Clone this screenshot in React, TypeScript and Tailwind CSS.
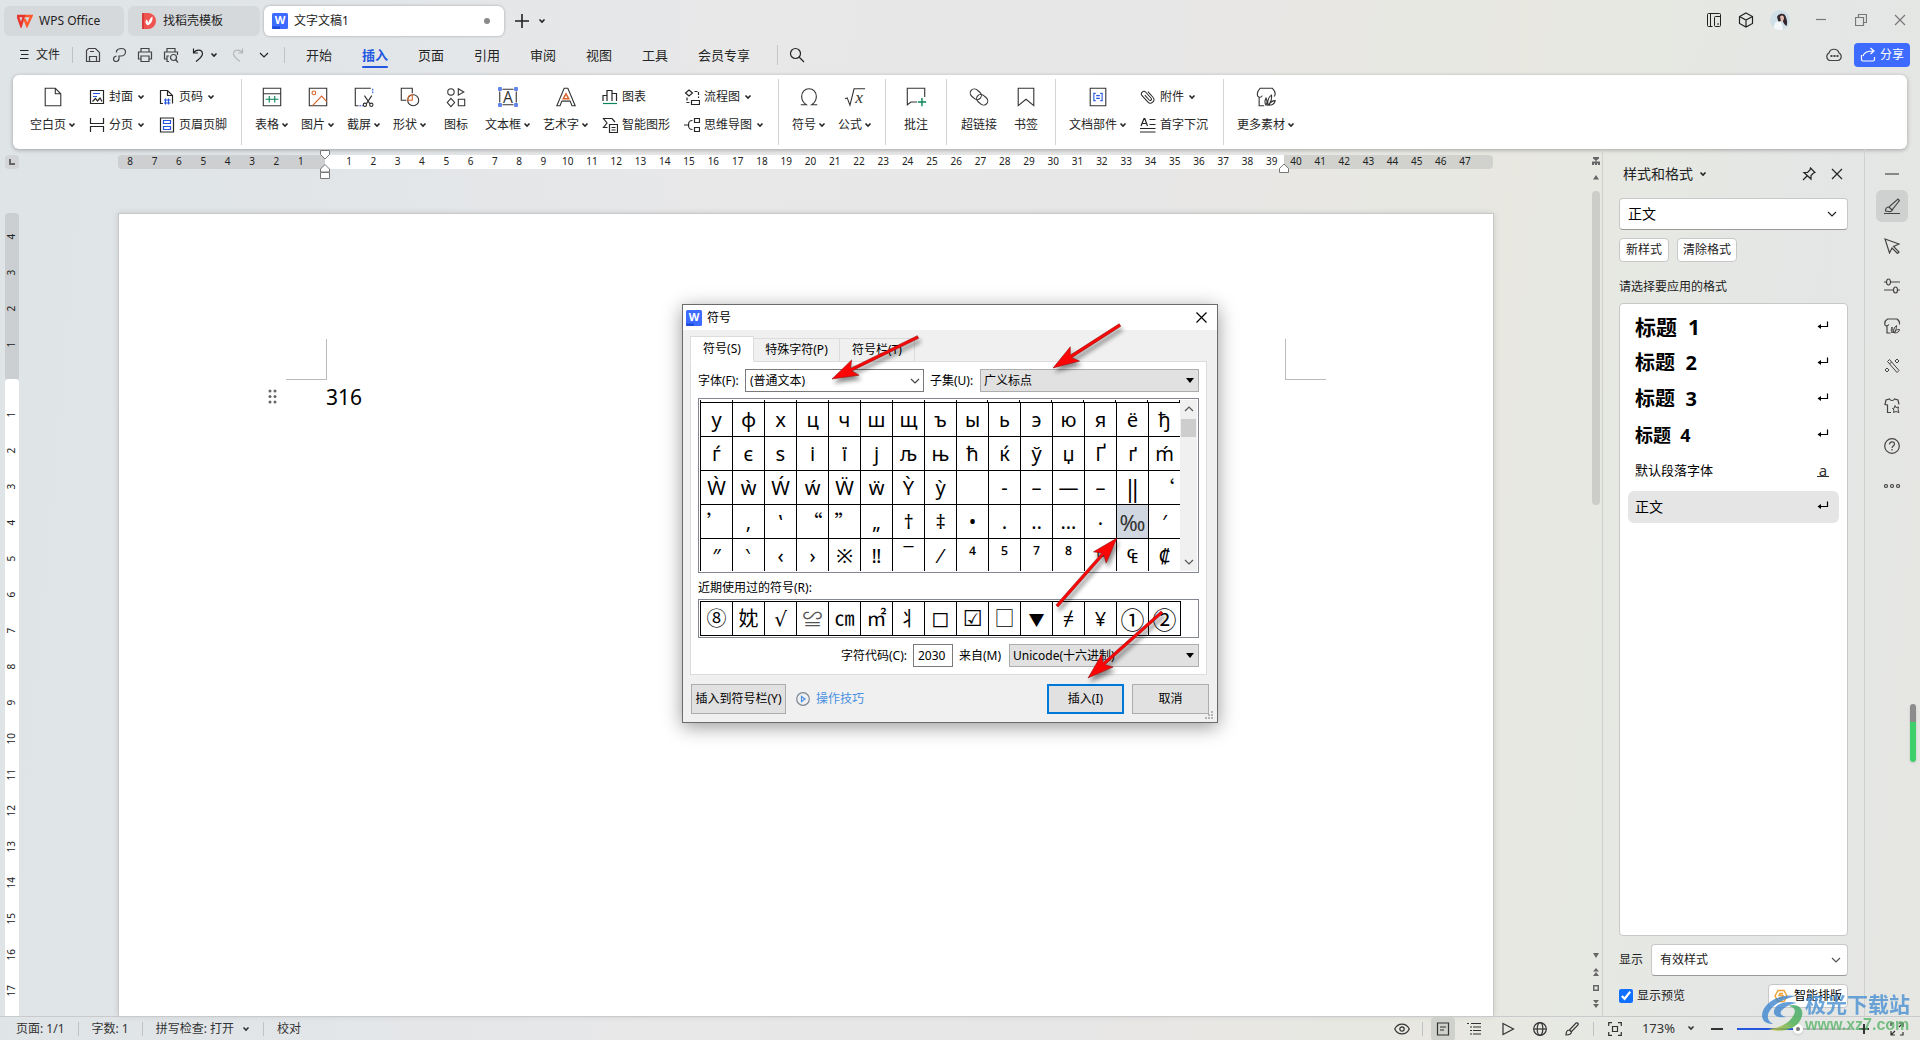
import { useState, type ReactNode } from "react";

type IconProps = { children: ReactNode; size?: number; className?: string };

// Line icons, one unit per pixel
function Icon({ children, size = 24, className = "" }: IconProps) {
  return (
    <svg
      width={size}
      height={size}
      viewBox={`0 0 ${size} ${size}`}
      fill="none"
      stroke="currentColor"
      strokeWidth="1.2"
      className={`shrink-0 ${className}`}
      aria-hidden="true"
    >
      {children}
    </svg>
  );
}

function Caret({ className = "" }: { className?: string }) {
  return (
    <svg width="8" height="8" viewBox="0 0 8 8" fill="none" stroke="currentColor" strokeWidth="1.6" className={`shrink-0 ${className}`} aria-hidden="true">
      <path d="M1.5 2.5 4 5l2.500-2.500" />
    </svg>
  );
}

function WideCaret({ className = "" }: { className?: string }) {
  return (
    <svg width="12" height="8" viewBox="0 0 12 8" fill="none" stroke="currentColor" strokeWidth="1.2" className={`shrink-0 ${className}`} aria-hidden="true">
      <path d="M2 2l4 4 4-4" />
    </svg>
  );
}

function DocLogo() {
  return (
    <svg width="16" height="16" viewBox="0 0 16 16" aria-hidden="true" className="shrink-0">
      <rect width="16" height="16" rx="1.500" fill="#3d6bff" />
      <path d="M0 13.500h8V16H1.500A1.500 1.500 0 0 1 0 14.500z" fill="#1d49dc" />
      <text x="8" y="11" textAnchor="middle" fontSize="11" fontWeight="700" fill="#fff" fontFamily="Noto Sans, sans-serif">
        W
      </text>
    </svg>
  );
}

const BLUE = "#2456e0";
const GREEN = "#0b8457";
const ORANGE = "#d8632b";

const icons: Record<string, ReactNode> = {
  blank: <path d="M3.500 2.500h11l6 6v13h-17zM14.500 2.500v6h6" />,
  table: (
    <>
      <path d="M2.500 2.500h19v19h-19zM2.500 8.500h19" />
      <path d="M5 14.500h14M9 11v7M15 11v7" stroke={GREEN} />
    </>
  ),
  picture: (
    <>
      <path d="M2.500 2.500h19v19h-19z" />
      <circle cx="7.500" cy="7.500" r="2" stroke={ORANGE} />
      <path d="M6 21.500 16 11l5.500 6" stroke={ORANGE} />
    </>
  ),
  screenshot: (
    <>
      <path d="M6 21.500H2.500v-19h17" />
      <path d="M21.500 3v6M7 21.500h4" stroke={BLUE} strokeDasharray="2 1" />
      <path d="M12.500 10.500l6 9M20.500 10.500l-6 9" />
      <circle cx="13" cy="20.500" r="1.800" />
      <circle cx="20" cy="20.500" r="1.800" />
    </>
  ),
  shapes: (
    <>
      <path d="M8 15.500H2.500v-13h12V8" />
      <circle cx="15.500" cy="15.500" r="6" />
      <path d="M9.500 15.500c0-3.500 2-6 5-6v6z" stroke={ORANGE} />
    </>
  ),
  iconset: (
    <>
      <circle cx="6.500" cy="6.500" r="3.500" />
      <path d="M14.500 3v7l6-3.500zM6.500 13.500l4 4.500-4 4.500-4-4.500zM14.500 14.500h7v7h-7z" />
    </>
  ),
  textbox: (
    <>
      <path d="M3 6v12M21 6v12M6 3.500h12M6 20.500h12" />
      <g stroke={BLUE}>
        <path d="M2 2h2.500v2.500H2zM19.500 2H22v2.500h-2.500zM2 19.500h2.500V22H2zM19.500 19.500H22V22h-2.500z" />
      </g>
      <text x="12" y="18" textAnchor="middle" fontSize="17" fill="#333" stroke="none" fontFamily="Open Sans, sans-serif">
        A
      </text>
    </>
  ),
  wordart: (
    <>
      <path d="M10 2.500h4l8 19h-3.500l-2-5h-9l-2 5H2z" />
      <path d="M12 8.500l3 5.500H9z" stroke={ORANGE} strokeWidth="1.600" />
    </>
  ),
  omega: <path d="M3 20.500h6c-3-2-5-5-5-9 0-5 3.500-8.500 8-8.500s8 3.500 8 8.500c0 4-2 7-5 9h6" />,
  formula: (
    <>
      <path d="M1 14l2.500-1 3 8L11 3h12" />
      <text x="16.500" y="19" textAnchor="middle" fontSize="19" fontStyle="italic" fill="#333" stroke="none" fontFamily="Liberation Serif, serif">
        x
      </text>
    </>
  ),
  comment: (
    <>
      <path d="M21.500 12V2.500h-19v18l4-3H13" />
      <path d="M18.500 13v9M14 17.500h9" stroke={GREEN} strokeWidth="1.500" />
    </>
  ),
  link: (
    <>
      <rect x="2" y="4.500" width="13" height="9" rx="4.500" transform="rotate(40 8.500 9)" />
      <rect x="9" y="10.500" width="13" height="9" rx="4.500" transform="rotate(40 15.500 15)" />
    </>
  ),
  bookmark: <path d="M3.500 2.500h17v19L12 14.500l-8.500 7z" />,
  docparts: (
    <>
      <path d="M3.500 2.500h17v19h-17z" />
      <path d="M9.500 8h-2v8h2M14.500 8h2v8h-2M10 10.500h4M10 13.500h4" stroke={BLUE} />
    </>
  ),
  material: (
    <>
      <path d="M10 21.500H4.500V12M21 11.500c2-3 1-6-2-9H5.500c-3 3-3.500 6-2.500 8.500 1.500 2 4 1.500 5-.500" />
      <path d="M12 21c-2-3-1.500-5 0-8 1.500 3 2 5 0 8zM14 21c-.500-5 1-9 4-11 .500 4-.500 8-4 11zM15 21c1.500-4 4-5 7-5-.500 3-3 5-7 5z" />
    </>
  ),
};

const smallIcons: Record<string, ReactNode> = {
  cover: (
    <>
      <path d="M1.500 1.500h13v13h-13z" />
      <path d="M4 4.500h7M4 7.500h4" stroke={BLUE} />
      <path d="M3.500 12.500l3-3 2 2.500 2.500-3 2 3.500" />
    </>
  ),
  pagebreak: <path d="M1.500 1v5.500h13V1M1.500 15V9.500h13V15" />,
  pageno: (
    <>
      <path d="M4 14.500H1.500v-13h7l5 5v8M8.500 1.500v5h5" />
      <path d="M6.500 9.500v6M9.500 9.500v6M5 11h6.500M5 14h6.500" stroke={BLUE} />
    </>
  ),
  headfoot: (
    <>
      <path d="M1.500 1h13v14h-13z" />
      <path d="M4.500 3.500h7v3h-7zM4.500 9.500h7v3h-7z" stroke={BLUE} />
    </>
  ),
  chart: (
    <>
      <path d="M1 12V6.500h4V12M5 8V1.500h5V12M10 4.500h4.500V12" />
      <path d="M1 14.500h14" stroke={GREEN} />
    </>
  ),
  smartart: <path d="M5.500 10.500h-4L5 6 1.500 1.500H10L13 5M7.500 7.500h8v8h-8zM9.500 10.500h4M9.500 13h4" />,
  flow: (
    <>
      <path d="M5 1l3.500 3L5 7 1.500 4zM7.500 11.500h8v4h-8z" />
      <path d="M3 8.500v5h3.500M10.500 2.500h4V9" strokeDasharray="3 1.500" />
    </>
  ),
  mind: (
    <>
      <path d="M10.500 1.500h5v4h-5zM10.500 10.500h5v4h-5zM0 8h4.500" />
      <path d="M8.500 3.500c-3 0-4 1-4 4.500s1 4.500 4 4.500" />
    </>
  ),
  clip: (
    <g transform="rotate(-42 8 8)" strokeWidth="1">
      <path d="M11.500 4v7.500a3.500 3.500 0 0 1-7 0V3a2.500 2.500 0 0 1 5 0v8a1.300 1.300 0 0 1-2.600 0V4.500" />
    </g>
  ),
  dropcap: <path d="M9.500 2.500h6M9.500 7.500h6M0 11.500h15.500M0 15h15.500M1 9l3-7.500h.8L7.500 9M2 6.500h4.500" />,
};

function BigTool({ icon, label, caret = true, className = "w-[46px]" }: { icon: string; label: string; caret?: boolean; className?: string }) {
  return (
    <button className={`flex flex-col items-center gap-[7px] pt-2.5 ${className}`}>
      <svg width="22" height="24" viewBox="0 0 24 24" fill="none" stroke="#333" strokeWidth="1.200" aria-hidden="true">
        {icons[icon]}
      </svg>
      <span className="flex items-center gap-0.5 leading-[18px] whitespace-nowrap">
        {label}
        {caret && <Caret />}
      </span>
    </button>
  );
}

function SmallTool({ icon, label, caret = false }: { icon: string; label: string; caret?: boolean }) {
  return (
    <button className="flex h-5 items-center gap-1 whitespace-nowrap">
      <Icon size={16}>{smallIcons[icon]}</Icon>
      {label}
      {caret && <Caret />}
    </button>
  );
}

function Divider() {
  return <div className="mx-[7px] my-1 w-px bg-[#d4d4d4]" />;
}

function Ribbon() {
  const col = "flex flex-col gap-2 pt-3";
  return (
    <section className="mx-[13px] flex h-[74px] shrink-0 rounded-md bg-white pl-[11px] text-[#262626] shadow-[0_1px_4px_rgba(0,0,0,0.3)]">
      <BigTool icon="blank" label="空白页" className="w-[58px]" />
      <div className={`${col} ml-[7px] w-[70px]`}>
        <SmallTool icon="cover" label="封面" caret />
        <SmallTool icon="pagebreak" label="分页" caret />
      </div>
      <div className={`${col} w-[75px]`}>
        <SmallTool icon="pageno" label="页码" caret />
        <SmallTool icon="headfoot" label="页眉页脚" />
      </div>
      <Divider />
      <BigTool icon="table" label="表格" />
      <BigTool icon="picture" label="图片" />
      <BigTool icon="screenshot" label="截屏" />
      <BigTool icon="shapes" label="形状" />
      <BigTool icon="iconset" label="图标" caret={false} />
      <BigTool icon="textbox" label="文本框" className="w-[58px]" />
      <BigTool icon="wordart" label="艺术字" className="w-[58px]" />
      <div className={`${col} ml-[7px] w-[82px]`}>
        <SmallTool icon="chart" label="图表" />
        <SmallTool icon="smartart" label="智能图形" />
      </div>
      <div className={`${col} w-[87px]`}>
        <SmallTool icon="flow" label="流程图" caret />
        <SmallTool icon="mind" label="思维导图" caret />
      </div>
      <Divider />
      <BigTool icon="omega" label="符号" />
      <BigTool icon="formula" label="公式" />
      <Divider />
      <BigTool icon="comment" label="批注" caret={false} />
      <Divider />
      <BigTool icon="link" label="超链接" caret={false} className="w-[50px]" />
      <BigTool icon="bookmark" label="书签" caret={false} className="w-[44px]" />
      <Divider />
      <BigTool icon="docparts" label="文档部件" className="w-[70px]" />
      <div className={`${col} ml-[7px] w-[76px]`}>
        <SmallTool icon="clip" label="附件" caret />
        <SmallTool icon="dropcap" label="首字下沉" />
      </div>
      <Divider />
      <BigTool icon="material" label="更多素材" className="w-[70px]" />
    </section>
  );
}

function TitleBar() {
  return (
    <header className="flex h-9 shrink-0 items-end gap-1 pl-1 text-[#222]">
      <button className="flex h-[30px] w-[120px] items-center gap-1.5 rounded-md bg-[#d6d9dc] pl-3">
        <svg width="17" height="14" viewBox="0 0 17 14" fill="none" strokeWidth="2.400" aria-hidden="true">
          <path d="M1 2h7L5 11.500 2 3" stroke="#e8342c" />
          <path d="M8.500 5 11 11.500 15.500 2H9" stroke="#ff5a2c" />
        </svg>
        WPS Office
      </button>
      <button className="flex h-[30px] w-[132px] items-center gap-[7px] rounded-md bg-[#d6d9dc] pl-3.5">
        <svg width="14" height="16" viewBox="0 0 14 16" aria-hidden="true">
          <path d="M0 0h6a8 8 0 0 1 0 16H0z" fill="#ef5350" />
          <path d="M0 0h2v16H0z" fill="#d83b3b" />
          <path d="M6 12.500C3 11 3 8 4.500 6.500 6 8 6.500 9 6.500 10c.5-3 1.500-5 4-6.500.5 4-1 7-4.500 9z" fill="#fff" />
        </svg>
        找稻壳模板
      </button>
      <button className="flex h-[30px] w-[240px] items-center gap-1.5 rounded-md bg-white pr-3.5 pl-2 shadow-[0_0_3px_rgba(0,0,0,0.3)]">
        <DocLogo />
        文字文稿1
        <span className="ml-auto size-1.5 rounded-full bg-[#8a8a8a]" />
      </button>
      <button aria-label="新建" className="flex h-[30px] items-center gap-2 pl-1.5">
        <Icon size={16}>
          <path d="M8 1v14M1 8h14" strokeWidth="1.600" />
        </Icon>
        <Caret />
      </button>
      <div className="ml-auto flex h-8 items-center pr-0.5">
        <button aria-label="侧栏" className="w-8">
          <Icon size={16} className="mx-auto">
            <path d="M6.500 14.500h-4a1 1 0 0 1-1-1v-11a1 1 0 0 1 1-1h11a1 1 0 0 1 1 1v11a1 1 0 0 1-1 1h-4a1 1 0 0 1-1-1v-8a1 1 0 0 1 1-1h5M4.500 1.500v13M11 12h2" strokeWidth="1" />
          </Icon>
        </button>
        <button aria-label="应用" className="w-8">
          <Icon size={16} className="mx-auto">
            <path d="M8 1l6.500 3.500v7L8 15l-6.500-3.500v-7zM1.500 4.500 8 8l6.500-3.500M8 8v7" />
          </Icon>
        </button>
        <button aria-label="账户" className="w-9">
          <svg width="20" height="20" viewBox="0 0 20 20" className="mx-auto">
            <circle cx="10" cy="10" r="10" fill="#cfdfe8" />
            <path d="M7 7c2-4 7-4.500 8.500-1 1 3 2.500 6 1 10-2-1-3.500-4-4-6l-4 2z" fill="#33262d" />
            <path d="M10 6.500c2-2 4-1 4 1.500s-1.500 3.500-3 3.500z" fill="#e6bcae" />
            <path d="M4 18c0-5 2-7 4-6.500 3-.5 5 3 5 8-3 1-7 .5-9-1.500z" fill="#f4f8fa" />
          </svg>
        </button>
        <button aria-label="最小化" className="w-[42px] pl-1 text-[#777]">
          <Icon size={12} className="mx-auto"><path d="M1 5.500h10" /></Icon>
        </button>
        <button aria-label="还原" className="w-[42px] text-[#777]">
          <Icon size={12} className="mx-auto"><path d="M.5 3.500h8v8h-8zM3.500 3.500v-3h8v8h-3" /></Icon>
        </button>
        <button aria-label="关闭" className="w-9 text-[#777]">
          <Icon size={12} className="mx-auto"><path d="M1 1l10 10M11 1 1 11" /></Icon>
        </button>
      </div>
    </header>
  );
}

const menuTabs = ["开始", "插入", "页面", "引用", "审阅", "视图", "工具"];

function MenuBar() {
  return (
    <nav className="flex h-[39px] shrink-0 items-center pb-0.5 text-[#262626]">
      <button className="flex items-center gap-[7px] pl-5">
        <Icon size={9}><path d="M0 .5h8.500M1 4.500h7.500M0 8.500h8.500" /></Icon>
        文件
      </button>
      <div className="ml-3 h-4 w-px bg-[#bfc2c5]" />
      <div className="ml-[7px] flex text-[#444]">
        <button aria-label="保存" className="w-[26px]">
          <Icon size={16} className="mx-auto"><path d="M1.500 14.500v-11l2-2h7l4 4v9zM4.500 14V9.500h7V14M5 4.500h4" /></Icon>
        </button>
        <button aria-label="输出" className="w-[26px]">
          <Icon size={16} className="mx-auto"><path d="M5.500 5.500V4c1-2 3-2.500 5-2.500 2.500 0 4 1.300 4 3.500s-2 4-4.500 4H8v2.500c0 2-1.500 3-3 3s-2.500-1-2.500-2.500S3.500 9.500 5.500 9" /></Icon>
        </button>
        <button aria-label="打印" className="w-[26px]">
          <Icon size={16} className="mx-auto"><path d="M4 5V1.500h8V5M4 12H1.500V5h13v7H12M4 9h8v5.500H4z" /></Icon>
        </button>
        <button aria-label="打印预览" className="w-[26px]">
          <Icon size={16} className="mx-auto"><path d="M4 5V1.500h8V5M4 12H1.500V5h13v3M6 14.500H4V9h2" /><circle cx="10.500" cy="10.500" r="3" /><path d="m12.500 12.500 2.500 3" /></Icon>
        </button>
      </div>
      <button aria-label="撤销" className="ml-1.5 flex items-center gap-1">
        <Icon size={16}><path d="M3.500 1.500v4.500H8M3.500 6C6 2 12 2 12.500 6.500 12.500 10 9 12 6 14.500" /></Icon>
        <Caret />
      </button>
      <button aria-label="恢复" className="ml-3 text-[#b4b7ba]">
        <Icon size={16}><path d="M12.500 1.500v4.500H8M12.500 6C10 2 4 2 3.500 6.500 3.500 10 7 12 10 14.500" /></Icon>
      </button>
      <button aria-label="更多" className="ml-3"><WideCaret /></button>
      <div className="ml-3.5 h-4 w-px bg-[#bfc2c5]" />
      <div className="ml-1.5 flex h-full text-[13px]">
        {menuTabs.map((tab) => (
          <button key={tab} className={`relative w-14 pt-0.5 ${tab === "插入" ? "font-bold text-[#2456e0]" : ""}`}>
            {tab}
            {tab === "插入" && <span className="absolute inset-x-[15px] bottom-[5px] h-0.5 rounded bg-[#2456e0]" />}
          </button>
        ))}
        <button className="w-[82px] pt-0.5">会员专享</button>
      </div>
      <div className="ml-3 h-5 w-px bg-[#c4c6c8]" />
      <button aria-label="搜索" className="ml-[11px]">
        <Icon size={16}><circle cx="6.500" cy="6.500" r="5" /><path d="m10 10 5 5" /></Icon>
      </button>
      <button aria-label="云" className="mr-[11px] ml-auto text-[#444]">
        <Icon size={18}><path d="M5 14.500a4 4 0 0 1-1-7.500 5.200 5.200 0 0 1 10 0 4 4 0 0 1-1 7.500z" /><path d="M5.500 10h2M8.500 10h2M11.500 10h2" strokeWidth="2" /></Icon>
      </button>
      <button className="mr-[10px] flex h-6 w-14 items-center justify-center gap-1 rounded bg-[#3d6bff] text-white">
        <Icon size={16}><path d="M1.500 8v4.500c0 1 .5 1.500 1.500 1.500h10c1 0 1.500-.5 1.500-1.500V10M3 9c1-3.500 4-5 10-5M10.500 1l3.500 3-3.500 3" /></Icon>
        分享
      </button>
    </nav>
  );
}

const range = (n: number) => Array.from({ length: n }, (_, i) => i + 1);

function HorizontalRuler() {
  return (
    <div className="relative mt-1.5 mr-[111px] ml-[118px] flex h-3.5 text-center text-[10px] leading-[13px] text-[#222]">
      <div className="grid w-[207px] grid-cols-8 rounded-l bg-[#cdcfd1] pr-3">
        {range(8).reverse().map((n) => <span key={n}>{n}</span>)}
      </div>
      <div className="grid flex-1 grid-cols-[repeat(39,minmax(0,1fr))] bg-white pl-3">
        {range(39).map((n) => <span key={n}>{n}</span>)}
      </div>
      <div className="grid w-[209px] grid-cols-8 rounded-r bg-[#d1d2cd] pr-4">
        {range(8).map((n) => <span key={n}>{n + 39}</span>)}
      </div>
      <svg width="12" height="32" viewBox="0 0 12 32" className="absolute -top-1.5 left-[201px]" fill="#fff" stroke="#777">
        <path d="M1.500 1.500h9v4L6 10 1.500 5.500zM6 15.500l4.500 4.500v3h-9v-3zM1.500 23.500h9v6h-9z" />
      </svg>
      <svg width="12" height="12" viewBox="0 0 12 12" className="absolute top-2 right-[203px]" fill="#fff" stroke="#777">
        <path d="M6 1l4.500 4.500v4h-9v-4z" />
      </svg>
    </div>
  );
}

function VerticalRuler() {
  return (
    <div className="ml-[5px] flex w-3.5 flex-col overflow-hidden rounded-t text-center text-[10px] text-[#222]">
      <div className="flex h-[166px] shrink-0 flex-col-reverse bg-[#cccfd1] pb-4">
        {range(4).map((n) => (
          <span key={n} className="flex h-9 shrink-0 items-center justify-center"><span className="-rotate-90">{n}</span></span>
        ))}
      </div>
      <div className="min-h-0 flex-1 rounded-t-sm bg-white pt-[18px]">
        {range(17).map((n) => (
          <span key={n} className="flex h-9 items-center justify-center"><span className="-rotate-90">{n}</span></span>
        ))}
      </div>
    </div>
  );
}

function Editor() {
  return (
    <main className="flex min-w-0 flex-1">
      <div className="flex min-h-0 min-w-0 flex-1 flex-col">
        <div className="relative">
          <HorizontalRuler />
          <span className="absolute top-1.5 left-[5px] flex size-3.5 items-center justify-center rounded-sm bg-[#d3d5d7]">
            <span className="size-1.5 border-b-2 border-l-2 border-[#666]" />
          </span>
        </div>
        <div className="flex min-h-0 flex-1 pt-11">
          <VerticalRuler />
          <div className="mr-[110px] ml-[99px] flex-1 overflow-hidden border border-b-0 border-[#c8c8c8] bg-white shadow-[0_0_6px_rgba(0,0,0,0.12)]">
            <div className="mt-[125px] flex justify-between px-[167px]">
              <span className="size-[41px] border-r border-b border-[#bbb]" />
              <span className="size-[41px] border-b border-l border-[#bbb]" />
            </div>
            <div className="flex items-center pt-px pl-[149px]">
              <svg width="9" height="16" viewBox="0 0 9 16" fill="#666" aria-hidden="true">
                <circle cx="2" cy="2" r="1.500" /><circle cx="7" cy="2" r="1.500" />
                <circle cx="2" cy="7.500" r="1.500" /><circle cx="7" cy="7.500" r="1.500" />
                <circle cx="2" cy="13" r="1.500" /><circle cx="7" cy="13" r="1.500" />
              </svg>
              <p className="pl-[49px] text-[21px] leading-8 text-black">316</p>
            </div>
          </div>
        </div>
      </div>
      <div className="-ml-[14px] flex w-3 flex-col items-center gap-2 pt-2 pb-2 text-[#666]">
        <svg width="8" height="8" viewBox="0 0 8 8" fill="currentColor"><path d="M1 0h6v1.500L4.500 3.500v1H8V8H6V6.500H5V8H3V6.500H2V8H0V4.500h3.500v-1L1 1.500z" /></svg>
        <svg width="6" height="8" viewBox="0 0 6 8" fill="currentColor"><path d="M3 2l3 4.500H0z" /></svg>
        <div className="mt-0.5 h-[314px] w-2 rounded-full bg-[#cccdc9]" />
        <div className="flex-1" />
        <svg width="6" height="8" viewBox="0 0 6 8" fill="currentColor"><path d="M0 1h6L3 6z" /></svg>
        <svg width="6" height="8" viewBox="0 0 6 8" fill="currentColor"><path d="M3 0l3 3.500H0zM3 4l3 4H0z" /></svg>
        <svg width="6" height="8" viewBox="0 0 6 8" fill="none" stroke="currentColor" strokeWidth="1.500"><path d="M.7 1.700h4.600v4.600H.7z" /></svg>
        <svg width="6" height="8" viewBox="0 0 6 8" fill="currentColor"><path d="M0 0h6L3 3.500zM0 4h6L3 8z" /></svg>
      </div>
    </main>
  );
}

const styleList = [
  { name: "标题 1", text: "text-[21px] font-bold", enter: true },
  { name: "标题 2", text: "text-xl font-bold", enter: true },
  { name: "标题 3", text: "text-xl font-bold", enter: true },
  { name: "标题 4", text: "text-lg font-bold", enter: true },
  { name: "默认段落字体", text: "text-[13px]", enter: false },
  { name: "正文", text: "text-sm", enter: true },
];

function StylePanel() {
  const [active, setActive] = useState("正文");
  return (
    <aside className="flex w-[263px] shrink-0 flex-col border-x border-[#cfd1d0] pr-4 pb-2 pl-4 text-[#222]">
      <div className="flex h-[49px] items-center pl-1">
        <h2 className="text-sm">样式和格式</h2>
        <Caret className="ml-1.5" />
        <button aria-label="固定" className="mr-[15px] ml-auto">
          <Icon size={14}><path d="M8.500 1 13 5.500l-1.500.5L9 8.500V12L2 5.500h3.500L8 3zM5 9l-4 4" /></Icon>
        </button>
        <button aria-label="关闭窗格" className="mr-[5px]">
          <Icon size={12}><path d="M1 1l10 10M11 1 1 11" /></Icon>
        </button>
      </div>
      <div className="relative">
        <select aria-label="当前样式" className="h-8 w-full appearance-none rounded border border-[#c8c8c8] border-b-[#999] bg-white pl-2 text-sm text-black">
          <option>正文</option>
        </select>
        <WideCaret className="pointer-events-none absolute top-3 right-2.5" />
      </div>
      <div className="mt-2 flex gap-2">
        <button className="h-6 w-[50px] rounded border border-[#c8c8c8] bg-white">新样式</button>
        <button className="h-6 w-[60px] rounded border border-[#c8c8c8] bg-white">清除格式</button>
      </div>
      <p className="mt-4 leading-[18px]">请选择要应用的格式</p>
      <ul className="mt-[7px] flex-1 rounded border border-[#c8c8c8] bg-white px-2 pt-[5px] text-black">
        {styleList.map((s) => (
          <li key={s.name} className="flex h-9 items-center">
            <button
              onClick={() => setActive(s.name)}
              className={`flex h-8 w-full items-center justify-between rounded-md pr-2.5 pl-[7px] ${active === s.name ? "bg-[#e5e5e5]" : ""}`}
            >
              <span className={`whitespace-pre ${s.text}`}>{s.name.replace(" ", "  ")}</span>
              {s.enter ? (
                <Icon size={12}><path d="M10.500.500v5H2" /><path d="M.500 5.500 4 3v5z" fill="currentColor" stroke="none" /></Icon>
              ) : (
                <span className="w-3 border-b border-[#333] text-center text-[15px] leading-[11px] text-[#333]">a</span>
              )}
            </button>
          </li>
        ))}
      </ul>
      <div className="mt-2 flex items-center gap-2">
        <label htmlFor="show-styles">显示</label>
        <div className="relative flex-1">
          <select id="show-styles" className="h-8 w-full appearance-none rounded border border-[#c8c8c8] border-b-[#999] bg-white pl-2">
            <option>有效样式</option>
          </select>
          <WideCaret className="pointer-events-none absolute top-3 right-1.5 text-[#555]" />
        </div>
      </div>
      <div className="mt-2 flex items-center">
        <input id="preview" type="checkbox" defaultChecked className="size-3.5 accent-[#1070ff]" />
        <label htmlFor="preview" className="pl-1">显示预览</label>
        <button className="ml-auto flex h-6 w-20 items-center justify-center gap-1.5 rounded border border-[#c8c8c8] bg-white text-black">
          <svg width="14" height="14" viewBox="0 0 14 14" fill="none" stroke="#f0a030" strokeWidth="1.400" aria-hidden="true">
            <path d="M4 1.500h6L13 7l-3 5.500H4L1 7zM9 4.500H6L5 6.500h4l-1 3H5" />
          </svg>
          智能排版
        </button>
      </div>
    </aside>
  );
}

const sideIcons: { label: string; art: ReactNode }[] = [
  { label: "样式", art: <path d="M0 15.500h16M1.500 13c0-2.500 1.500-4 3.500-4l9-8 1.500 1.500-7 9c0 1.500-2 2.500-4 2zM5 9l3 3" /> },
  { label: "选择", art: <path d="M1 1l14 5-5.500 2.500L15 14l-1.500 1.500L8 10l-2.500 5z" /> },
  { label: "设置", art: <><path d="M0 4h2.500M6.500 4H16M0 12h9.500M13.500 12H16" /><ellipse cx="4.500" cy="4" rx="2" ry="3" /><ellipse cx="11.500" cy="12" rx="2" ry="3" /></> },
  { label: "素材", art: <><path d="M6.500 15H3V7.500M15.500 6.500c.5-2-.5-4-2.500-5.500H3.500C1 2.500.5 5 1 7c1 1.500 3 1 4-.5" /><path d="M8 15c-1-2-1-4 0-6 1 2 1.500 4 0 6zM9.500 15c0-4 1-6 3-7.500 0 3-.5 5.500-3 7.500zM10.500 15c1-3 2.500-3.500 5-3.500 0 2-2 3.500-5 3.500z" strokeWidth="1" /></> },
  { label: "美化", art: <><path d="M3.500 3.500 5.500 1.500 15 12.500l-2 2zM5.500 6l2-2" strokeWidth="1" /><path d="M13 1l2 2-2 2-2-2zM3 10l2 2-2 2-2-2z" strokeWidth="1" /></> },
  { label: "皮肤", art: <><path d="M7 14.500H3.500V7L1 6.500 2 2l3.500-1c1 2 4 2 5 0L14 2l1 4.500" /><path d="M11 7.500l1 2 2.500-.5-.5 2.500 1 3-3-1-2.500 1 .5-2.500-1.500-1.500 2-.5z" strokeWidth="1" /></> },
  { label: "帮助", art: <><circle cx="8" cy="8" r="7.300" /><path d="M5.500 6.500c0-3.500 5-3.500 5-.5 0 2-2.500 2-2.500 4M8 11v1.500" /></> },
  { label: "更多", art: <><circle cx="2" cy="8" r="1.500" /><circle cx="8" cy="8" r="1.500" /><circle cx="14" cy="8" r="1.500" /></> },
];

function SideBar() {
  return (
    <aside className="flex w-[55px] shrink-0 flex-col items-center gap-2 pr-0.5 text-[#444]">
      <button aria-label="收起" className="-mb-2 flex h-[41px] items-center pt-2">
        <span className="block h-0.5 w-3.5 bg-[#888]" />
      </button>
      {sideIcons.map((item, i) => (
        <button key={item.label} aria-label={item.label} className={`flex size-8 items-center justify-center rounded-md ${i === 0 ? "bg-[#cfd0d0]" : ""}`}>
          <Icon size={16}>{item.art}</Icon>
        </button>
      ))}
    </aside>
  );
}

function StatusBar() {
  const sep = "h-3.5 w-px bg-[#c0c2c4]";
  return (
    <footer className="flex h-6 shrink-0 items-center border-t border-[#c8cacb] pl-4 text-[#333]">
      <div className="flex items-center gap-[13px]">
        <span>页面: 1/1</span>
        <span className={sep} />
        <span>字数: 1</span>
        <span className={sep} />
        <button className="flex items-center gap-2">拼写检查: 打开<Caret /></button>
        <span className={sep} />
        <button>校对</button>
      </div>
      <div className="ml-auto flex items-center pr-4">
        <Icon size={16}><path d="M.7 8C4 1.500 12 1.500 15.300 8 12 14.500 4 14.500.7 8z" /><circle cx="8" cy="8" r="2.200" /></Icon>
        <span className={`${sep} mr-2 ml-3`} />
        <button aria-label="页面视图" className="flex h-6 w-6 items-center justify-center rounded-sm bg-[#cfd1cc]">
          <Icon size={14}><path d="M1.500 1h11v12h-11zM4 5h6M4 8h4" /></Icon>
        </button>
        <button aria-label="大纲" className="ml-3"><Icon size={14}><path d="M0 1.500h2M4 1.500h10M3 5h2M6 5h8M3 8.500h2M6 8.500h8M3 12h2M6 12h8" /></Icon></button>
        <button aria-label="阅读" className="ml-5"><Icon size={14}><path d="M2 1.500 12.500 7 2 12.500z" /></Icon></button>
        <button aria-label="网页" className="ml-[18px]"><Icon size={14}><circle cx="7" cy="7" r="6.300" /><ellipse cx="7" cy="7" rx="2.800" ry="6.300" /><path d="M.7 7h12.600" /></Icon></button>
        <button aria-label="书写" className="ml-[18px]"><Icon size={14}><path d="M1 13c0-3 1-5 3.500-5L11 1c2-.5 2.500.5 2 2L6.500 9.500C6.500 12 4 13 1 13zM4.500 8l2 2" /></Icon></button>
        <span className={`${sep} mx-3.5`} />
        <button aria-label="适应"><Icon size={14}><path d="M.7 4V.7H4M10 .7h3.300V4M13.300 10v3.300H10M4 13.300H.7V10M4.500 4.500h5v5h-5z" /></Icon></button>
        <button className="ml-5 flex items-center gap-3 text-[13px]">173%<Caret /></button>
        <button aria-label="缩小" className="ml-4 h-0.5 w-3 bg-[#333]" />
        <div className="relative ml-3.5 flex h-4 w-[115px] items-center">
          <span className="h-0.5 w-[60px] bg-[#2456e0]" />
          <span className="h-0.5 flex-1 bg-[#bbb]" />
          <input aria-label="缩放" type="range" min={0} max={100} defaultValue={54} className="absolute inset-0 w-full opacity-0" />
          <span className="absolute left-[56px] size-2.5 rounded-full border-[3px] border-white bg-[#777] shadow" />
        </div>
        <button aria-label="放大" className="ml-1.5"><Icon size={12}><path d="M6 1v10M1 6h10" strokeWidth="2" /></Icon></button>
        <button aria-label="全屏" className="ml-5"><Icon size={14}><path d="M9 1h4v4M13 1 9 5M5 13H1V9M1 13l4-4M1 4V1h3M13 10v3h-3" /></Icon></button>
      </div>
    </footer>
  );
}

const symbolRows = [
  ["у", "ф", "х", "ц", "ч", "ш", "щ", "ъ", "ы", "ь", "э", "ю", "я", "ё", "ђ"],
  ["ѓ", "є", "ѕ", "і", "ї", "ј", "љ", "њ", "ћ", "ќ", "ў", "џ", "Ґ", "ґ", "ḿ"],
  ["Ẁ", "ẁ", "Ẃ", "ẃ", "Ẅ", "ẅ", "Ỳ", "ỳ", " ", "‐", "–", "—", "–", "‖", "‘"],
  ["’", "‚", "‛", "“", "”", "„", "†", "‡", "•", "․", "‥", "…", "‧", "‰", "′"],
  ["″", "‵", "‹", "›", "※", "‼", "‾", "⁄", "⁴", "⁵", "⁷", "⁸", "ⁿ", "₠", "₡"],
];
const recentSymbols = ["⑧", "妉", "√", "≌", "㎝", "㎡", "丬", "◻", "☑", "□", "▼", "≠", "¥", "①", "②"];

const plainGlyph = "text-xl font-['Noto_Sans','Noto_Sans_CJK_SC','DejaVu_Sans',sans-serif]";
const wideGlyph = "text-xl font-['Noto_Sans_CJK_SC',sans-serif]";
const glyphStyle: Record<string, string> = {
  // quotes take the full-width glyph, set to one side of its cell
  "‘": wideGlyph,
  "’": wideGlyph,
  "“": wideGlyph,
  "”": wideGlyph,
  "‰": "text-[22px] font-['Noto_Sans',sans-serif]",
  "‖": "text-2xl font-['Noto_Sans',sans-serif]",
  "√": "text-xl font-['DejaVu_Sans',sans-serif]",
  "≌": "text-xl text-[#555] font-['Noto_Sans_CJK_SC',sans-serif]",
  "◻": "text-[22px] font-bold font-['DejaVu_Sans',sans-serif]",
  "☑": "text-[22px] font-['DejaVu_Sans',sans-serif]",
  "▼": "text-base font-['Noto_Sans_CJK_SC',sans-serif]",
  "①": "text-2xl font-['Noto_Sans_CJK_SC',sans-serif]",
  "②": "text-2xl font-['Noto_Sans_CJK_SC',sans-serif]",
};

function SymbolRow({ items, selected }: { items: string[]; selected?: string }) {
  return (
    <div className="flex h-[34px] shrink-0 border-t border-black">
      {items.map((ch, i) => (
        <button
          key={i}
          className={`flex w-8 shrink-0 items-center justify-center overflow-hidden border-r border-black leading-8 ${glyphStyle[ch] ?? plainGlyph} ${
            ch === selected ? "bg-[#d0d7e0] text-[#333]" : ""
          }`}
        >
          {ch}
        </button>
      ))}
    </div>
  );
}

function DropArrow() {
  return (
    <svg width="8" height="5" viewBox="0 0 8 5" className="pointer-events-none absolute top-[9px] right-[5px]" aria-hidden="true">
      <path d="M0 0h8L4 5z" fill="#000" />
    </svg>
  );
}

function SymbolDialog() {
  const [tab, setTab] = useState("符号(S)");
  const greySelect = "block h-[23px] w-full appearance-none border border-[#adadad] bg-[#e1e1e1] pl-[3px]";
  return (
    <div
      role="dialog"
      aria-label="符号"
      className="absolute top-[304px] left-[682px] flex w-[536px] flex-col border border-[#6b6b6b] bg-[#f0f0f0] text-black shadow-[0_4px_18px_rgba(0,0,0,0.4)]"
    >
      <div className="flex h-[25px] items-center gap-[5px] bg-white pr-2.5 pl-[3px]">
        <DocLogo />
        <span>符号</span>
        <button aria-label="关闭" className="ml-auto"><Icon size={11}><path d="M.5.500l10 10M10.500.500l-10 10" /></Icon></button>
      </div>
      <div role="tablist" className="relative mt-1.5 -mb-px ml-[7px] flex items-end">
        {["符号(S)", "特殊字符(P)", "符号栏(T)"].map((name, i) => (
          <button
            key={name}
            role="tab"
            aria-selected={tab === name}
            onClick={() => setTab(name)}
            className={`border border-[#dcdcdc] ${["w-16", "w-[86px]", "w-[75px]"][i]} ${tab === name ? "z-10 h-[26px] border-b-white bg-white" : "h-6 border-l-0 bg-[#f0f0f0]"}`}
          >
            {name}
          </button>
        ))}
      </div>
      <div className="mr-[10px] ml-[7px] border border-[#dcdcdc] bg-white px-[7px] pb-[7px]">
        <div className="mt-[7px] flex items-center">
          <label htmlFor="font" className="w-[47px]">字体(F):</label>
          <div className="relative w-[179px]">
            <select id="font" className="block h-[23px] w-full appearance-none border border-[#7a7a7a] bg-white pl-1"><option>(普通文本)</option></select>
            <WideCaret className="pointer-events-none absolute top-2 right-[3px] text-[#444]" />
          </div>
          <label htmlFor="subset" className="w-14 pl-1.5 whitespace-nowrap">子集(U):</label>
          <div className="relative flex-1">
            <select id="subset" className={greySelect}><option>广义标点</option></select>
            <DropArrow />
          </div>
        </div>
        <div className="mt-1.5 flex h-[175px] justify-between border border-[#828790] p-px">
          <div className="flex flex-col overflow-hidden border-l border-black">
            <div className="flex h-0.5 shrink-0">
              {symbolRows[0].map((_, i) => <span key={i} className="w-8 border-r border-black" />)}
            </div>
            {symbolRows.map((row, i) => <SymbolRow key={i} items={row} selected="‰" />)}
          </div>
          <div className="flex w-[17px] flex-col items-center bg-[#f0f0f0] py-[5px] text-[#555]">
            <WideCaret className="rotate-180" />
            <span className="mt-1.5 h-[18px] w-[15px] bg-[#cdcdcd]" />
            <WideCaret className="mt-auto" />
          </div>
        </div>
        <p className="pt-1.5 pb-0.5 leading-[18px]">近期使用过的符号(R):</p>
        <div className="flex border border-[#828790] p-px">
          <div className="border-b border-l border-black">
            <SymbolRow items={recentSymbols} />
          </div>
        </div>
        <div className="mt-1.5 flex items-center justify-end">
          <label htmlFor="code">字符代码(C):</label>
          <input id="code" defaultValue="2030" className="mx-1.5 h-[23px] w-10 border border-[#7a7a7a] bg-white pl-1" />
          <label htmlFor="from" className="w-[50px]">来自(M)</label>
          <div className="relative w-[190px]">
            <select id="from" className={greySelect}><option>Unicode(十六进制)</option></select>
            <DropArrow />
          </div>
        </div>
      </div>
      <div className="flex items-center px-2 pt-[9px] pb-2">
        <button className="h-[30px] w-[95px] border border-[#adadad] bg-[#e1e1e1] whitespace-nowrap">插入到符号栏(Y)</button>
        <a href="#tips" className="ml-2.5 flex items-center gap-1.5 text-[#4a90e2]">
          <Icon size={14}><circle cx="7" cy="7" r="6.300" stroke="#7c8794" /><path d="M5.500 4.500 9 7 5.500 9.500z" /></Icon>
          操作技巧
        </a>
        <button className="ml-auto h-[30px] w-[77px] border-2 border-[#0078d7] bg-[#e1e1e1]">插入(I)</button>
        <button className="ml-2 h-[30px] w-[77px] border border-[#adadad] bg-[#e1e1e1]">取消</button>
      </div>
      <svg width="9" height="9" viewBox="0 0 9 9" fill="#b5b5b5" className="absolute right-[3px] bottom-0.5" aria-hidden="true">
        <path d="M6 0h2v2H6zM3 3h2v2H3zM6 3h2v2H6zM0 6h2v2H0zM3 6h2v2H3zM6 6h2v2H6z" />
      </svg>
    </div>
  );
}

// [tail x, tail y, tip x, tip y]
const arrows = [
  [918, 337, 832, 379],
  [1120, 325, 1053, 368],
  [1057, 606, 1117, 538],
  [1162, 612, 1088, 678],
];

function Arrows() {
  return (
    <svg width="1920" height="1040" viewBox="0 0 1920 1040" className="pointer-events-none absolute top-0 left-0 z-20 drop-shadow-[2px_4px_2px_rgba(0,0,0,0.45)]" aria-hidden="true">
      {arrows.map(([x1, y1, x2, y2]) => {
        const len = Math.hypot(x2 - x1, y2 - y1);
        const angle = (Math.atan2(y2 - y1, x2 - x1) * 180) / Math.PI;
        return (
          <g key={x1} transform={`translate(${x2} ${y2}) rotate(${angle})`} fill="#fb0606" stroke="#8c1010" strokeWidth="0.500">
            <path d={`M0 0L-26 8.500L-21.500 1.500L${-len} 1.500V-1.500L-21.500 -1.500L-26 -8.500Z`} />
          </g>
        );
      })}
    </svg>
  );
}

function Watermark() {
  return (
    <div className="pointer-events-none absolute right-2.5 bottom-1.5 flex items-center opacity-80">
      <svg width="44" height="38" viewBox="0 0 44 38" aria-hidden="true">
        <defs>
          <linearGradient id="swirl" x1="0" y1="1" x2="1" y2="0">
            <stop offset="0" stopColor="#e5c935" />
            <stop offset="0.500" stopColor="#4bb04f" />
            <stop offset="1" stopColor="#3aa56b" />
          </linearGradient>
        </defs>
        <path d="M35 2C20-1 2 8 1 21c0 7 5 9 11 9-6-3-7-9-2-15C16 8 26 4 35 2z" fill="#3f86cf" />
        <path d="M36 9c-12-3-22 1-23 8-1 6 6 7 12 6-5-1-7-4-4-7s8-6 15-7z" fill="#3f86cf" />
        <path d="M27 12c8 1 9 6 3 13-5 6-13 9-23 10 16 5 31-1 34-13 2-8-5-13-14-10z" fill="url(#swirl)" />
      </svg>
      <div className="flex flex-col whitespace-nowrap">
        <span className="text-[21px] leading-6 font-bold text-[#4a90d2]">极光下载站</span>
        <span className="font-['Liberation_Sans',sans-serif] text-base leading-[18px] font-bold text-[#5cb56b]">www.xz7.com</span>
      </div>
    </div>
  );
}

export default function App() {
  return (
    <div className="relative flex h-screen w-full flex-col overflow-hidden bg-linear-[95deg,#dfe4e7_0%,#e1e5e8_15%,#e8e8e9_36%,#e8e7e7_58%,#e8e8e1_76%,#e6e8e3_84%,#e4e6e6_92%,#e6e7e2_100%] font-['Noto_Sans','Noto_Sans_CJK_SC',sans-serif] text-xs">
      <TitleBar />
      <MenuBar />
      <Ribbon />
      <div className="flex min-h-0 flex-1">
        <Editor />
        <StylePanel />
        <SideBar />
      </div>
      <StatusBar />
      <div className="absolute top-[704px] right-1 flex w-1.5 flex-col overflow-hidden rounded-full shadow">
        <span className="h-[18px] bg-[#8c8c8c]" />
        <span className="h-10 bg-[#3ccf6a]" />
      </div>
      <SymbolDialog />
      <Arrows />
      <Watermark />
    </div>
  );
}
